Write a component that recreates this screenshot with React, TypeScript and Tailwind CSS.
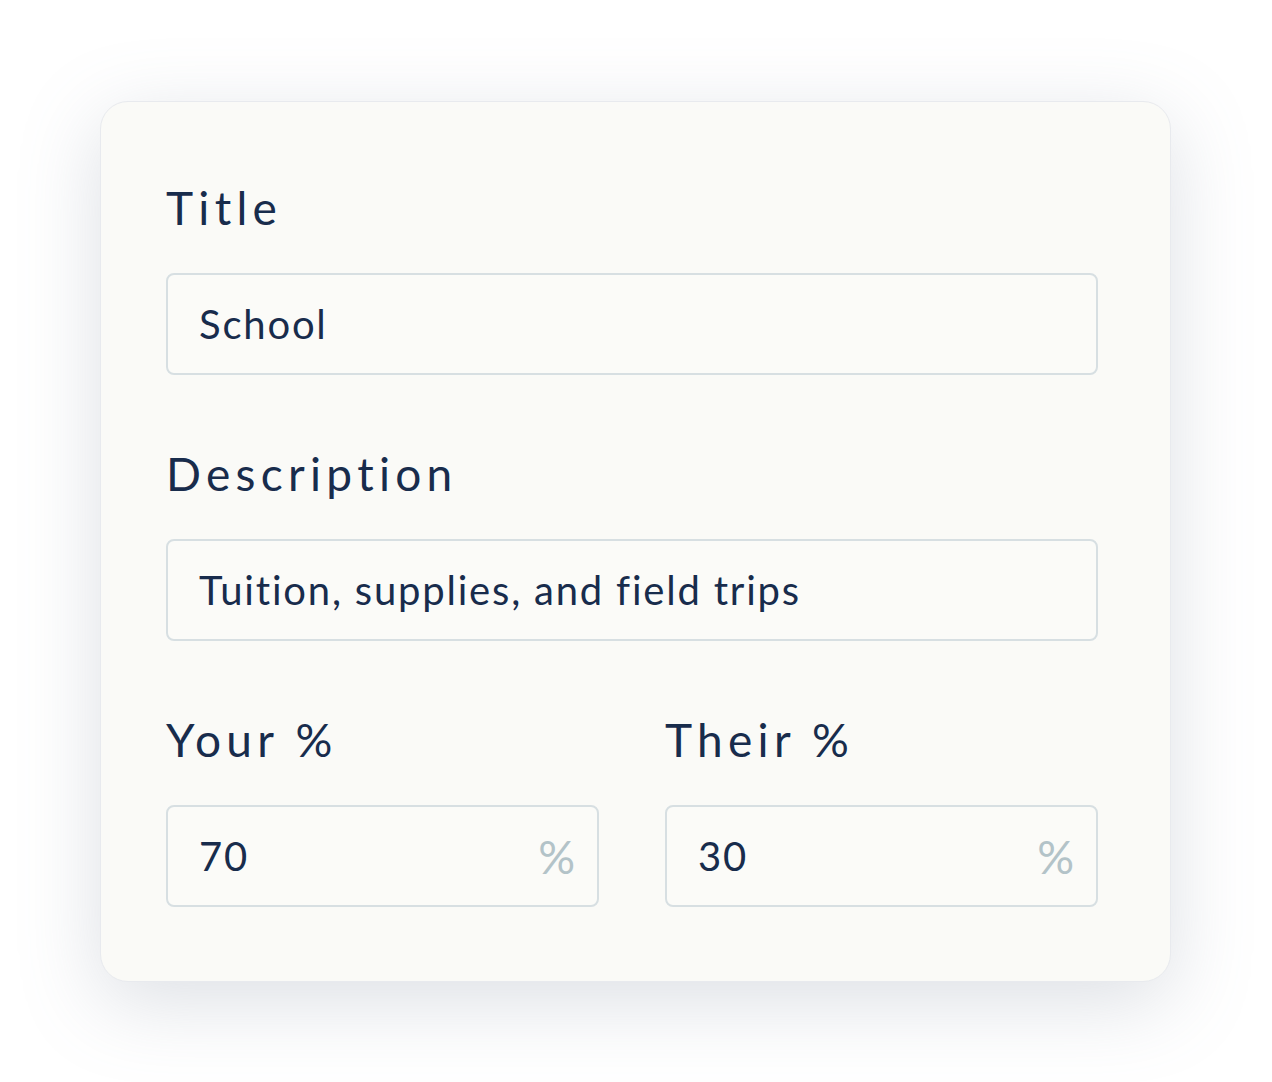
interface FieldProps {
  label: string;
  value: string;
  suffix?: boolean;
}

function Field({ label, value, suffix }: FieldProps) {
  return (
    <div className="flex flex-col">
      <label className="h-[60px] flex items-center text-[46px] leading-none tracking-[0.115em] text-[#182c4c]">
        {label}
      </label>
      <div className="mt-[35px] h-[102px] flex items-center justify-between rounded-[8px] border-2 border-[#d7dfe2] bg-[#fbfbf8] pl-[31px] pr-[22px]">
        <span className="text-[40px] tracking-[0.045em] text-[#182c4c]">{value}</span>
        {suffix && <span className="text-[46px] text-[#b3c3c8]">%</span>}
      </div>
    </div>
  );
}

export default function App() {
  return (
    <div
      className="min-h-[1082px] w-full bg-white pt-[101px] pl-[100px]"
      style={{ fontFamily: 'Lato, "Open Sans", sans-serif' }}
    >
      <div className="w-[1071px] h-[881px] rounded-[28px] bg-[#fafaf7] border border-[#e8eaee] shadow-[0_20px_80px_rgba(120,130,150,0.25)] pt-[76px] pl-[65px] pr-[72px]">
        <div className="flex flex-col gap-[69px]">
          <Field label="Title" value="School" />
          <Field label="Description" value="Tuition, supplies, and field trips" />
          <div className="grid grid-cols-2 gap-[66px]">
            <Field label="Your %" value="70" suffix />
            <Field label="Their %" value="30" suffix />
          </div>
        </div>
      </div>
    </div>
  );
}
